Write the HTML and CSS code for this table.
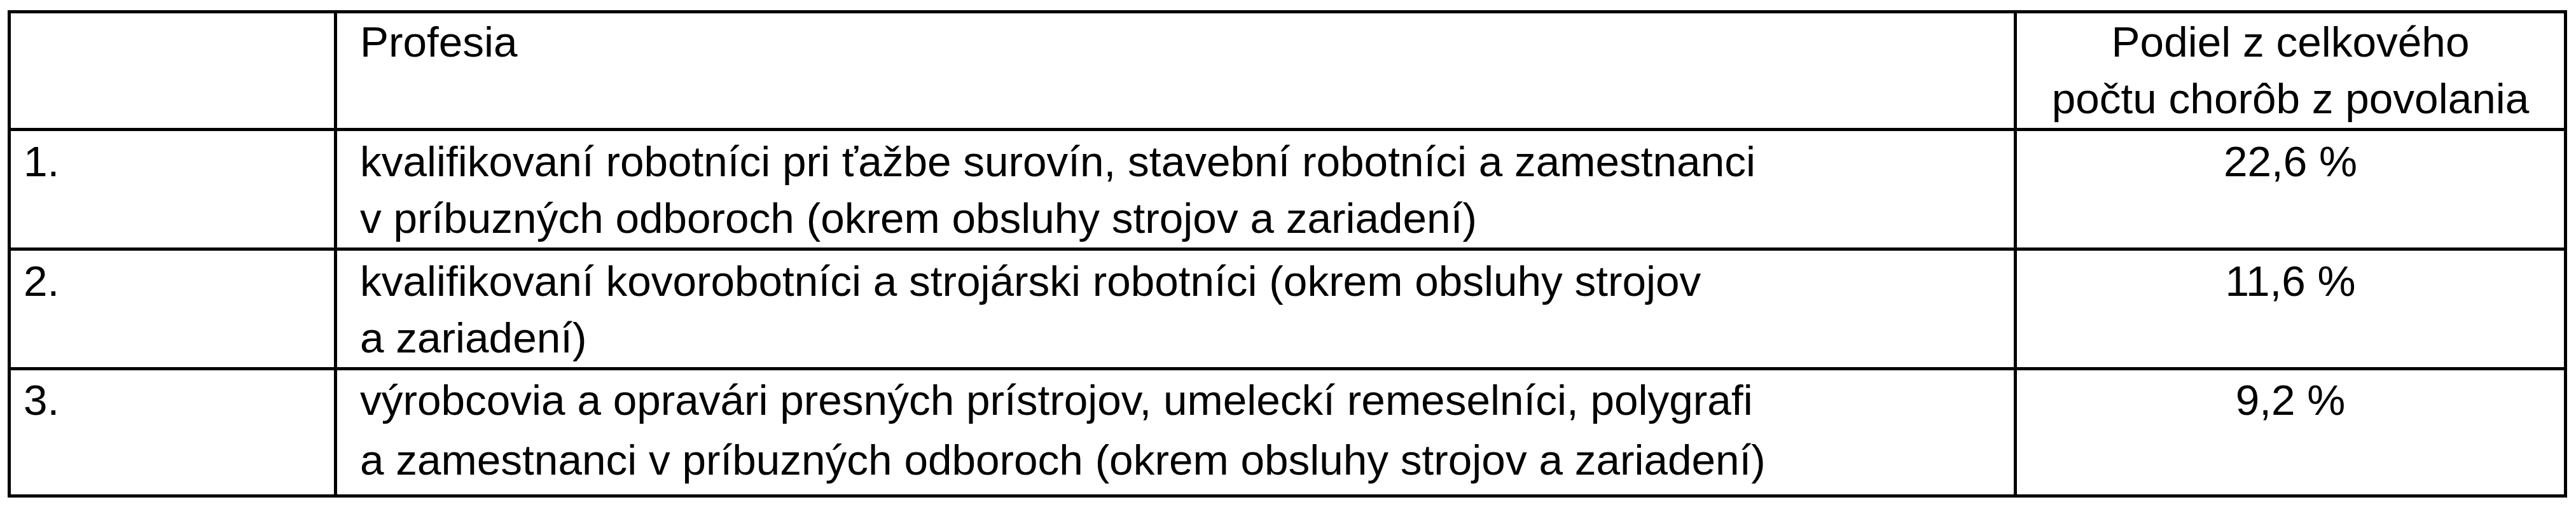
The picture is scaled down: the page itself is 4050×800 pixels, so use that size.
FILE: index.html
```html
<!DOCTYPE html>
<html lang="sk">
<head>
<meta charset="utf-8">
<title>Profesie</title>
<link rel="stylesheet" href="styles.css">
</head>
<body>
<table class="tbl">
  <colgroup>
    <col class="c-num">
    <col class="c-prof">
    <col class="c-share">
  </colgroup>
  <tr class="head">
    <td class="num"></td>
    <td class="prof">Profesia</td>
    <td class="share">Podiel z celkového<br>počtu chorôb z povolania</td>
  </tr>
  <tr class="row">
    <td class="num">1.</td>
    <td class="prof">kvalifikovaní robotníci pri ťažbe surovín, stavební robotníci a zamestnanci<br>v príbuzných odboroch (okrem obsluhy strojov a zariadení)</td>
    <td class="share">22,6 %</td>
  </tr>
  <tr class="row">
    <td class="num">2.</td>
    <td class="prof">kvalifikovaní kovorobotníci a strojárski robotníci (okrem obsluhy strojov<br>a zariadení)</td>
    <td class="share">11,6 %</td>
  </tr>
  <tr class="row row-last">
    <td class="num">3.</td>
    <td class="prof">výrobcovia a opravári presných prístrojov, umeleckí remeselníci, polygrafi<br>a zamestnanci v príbuzných odboroch (okrem obsluhy strojov a zariadení)</td>
    <td class="share">9,2 %</td>
  </tr>
</table>
</body>
</html>
```
FILE: styles.css
```css
html, body {
  margin: 0;
  padding: 0;
  background: #ffffff;
}

body {
  font-family: "Liberation Sans", Arial, Helvetica, sans-serif;
  font-size: 67.5px;
  line-height: 89px;
  color: #000000;
}

.tbl {
  margin: 16px 0 0 12px;
  width: 4019px;
  border-collapse: collapse;
  table-layout: fixed;
}

.c-num { width: 513px; }
.c-prof { width: 2641px; }
.c-share { width: 865px; }

.tbl td {
  border: 5px solid #000000;
  vertical-align: top;
  padding: 3px 0 2px 0;
  white-space: nowrap;
}

.head td {
  padding: 0 0 2px 0;
}

.row-last td {
  line-height: 94px;
  padding: 0 0 7px 0;
}

.tbl td.num {
  padding-left: 20px;
}

.tbl td.prof {
  padding-left: 36px;
}

.tbl td.share {
  text-align: center;
}
```
